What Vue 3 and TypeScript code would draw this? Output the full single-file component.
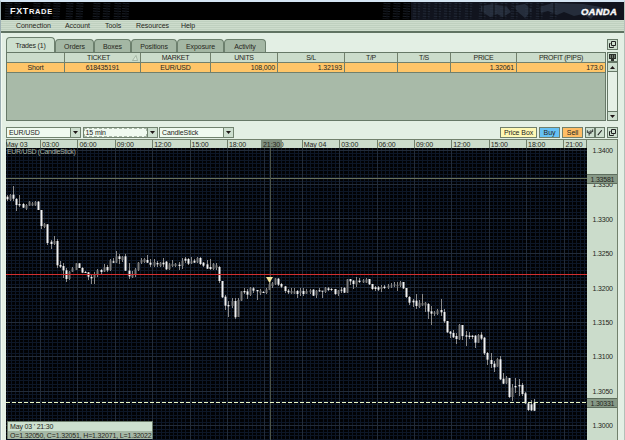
<template>
<div class="platform">
  <header class="banner">
    <svg class="pattern" width="623" height="18" viewBox="0 0 623 18">
      <rect x="410" width="213" height="18" fill="#11141e" />
      <g fill="#252d3b">
        <path d="M480 4l12-2 14 3 4 5-8 5-6-3-7 3-9-6zM512 4l12-2 7 6-7 8-6-5zM538 5l14-4 30 1 18 3 10 5-15 1-5 6-8-5-9 2-10-4-7 3-9-4-7 2z" />
      </g>
      <g v-for="(col, i) in codeCols" :key="i">
        <line :x1="col" y1="1" :x2="col - 1" y2="17" stroke="#303b4b" stroke-width="7" stroke-dasharray="1 1.6" opacity=".55" />
        <line :x1="col" y1="1" :x2="col" y2="17" stroke="#0a0c12" stroke-width="1" />
      </g>
    </svg>
    <span class="brand"><b>FXT</b>RADE</span>
    <span class="oanda">OANDA</span>
  </header>
  <nav class="menu">
    <span v-for="m in menus" :key="m.label" :style="{ width: m.width + 'px' }">{{ m.label }}</span>
  </nav>
  <main class="body">
    <div class="tab-row">
      <div class="tabs">
        <button v-for="(t, i) in tabs" :key="t.label" class="tab" :class="{ active: i === 0 }" :style="{ width: t.width + 'px' }">{{ t.label }}</button>
      </div>
      <button class="icon-btn">
        <svg width="9" height="9" viewBox="0 0 9 9"><path d="M3.5 1.5h4v4h-4zM2.5 3.5h-1v4h4v-1" fill="none" stroke="#222" /></svg>
      </button>
    </div>
    <section class="trades">
      <div class="grid">
        <div class="row head">
          <div v-for="c in columns" :key="c.title" class="cell" :class="{ sorted: c.title === 'TICKET' }" :style="{ width: c.width + 'px' }">{{ c.title }}
            <svg v-if="c.title === 'TICKET'" class="sort" width="6" height="6" viewBox="0 0 6 6"><path d="M.5 5.5L4 .5l1.500 5z" fill="#d8e8d8" stroke="#93a593" stroke-width=".7" /></svg>
          </div>
        </div>
        <div class="row trade">
          <div v-for="(c, i) in columns" :key="c.title" class="cell" :class="{ num: i > 2 }" :style="{ width: c.width + 'px' }">{{ c.value }}</div>
        </div>
      </div>
      <div class="scroll">
        <button class="icon-btn">
          <svg width="9" height="9" viewBox="0 0 9 9"><path d="M1 1h7v5H6v2H3V6H1z" fill="#2b302b" /><path d="M2.500 2v3M4.500 2v3M6.500 2v3" stroke="#9fb09f" stroke-width=".6" /></svg>
        </button>
        <button class="icon-btn arrow"><svg width="5" height="3"><path d="M0 3L2.500 0 5 3z" fill="#201818" /></svg></button>
        <div class="track"></div>
        <button class="icon-btn arrow"><svg width="5" height="3"><path d="M0 0L2.500 3 5 0z" fill="#201818" /></svg></button>
      </div>
    </section>
    <div class="toolbar">
      <div v-for="s in selects" :key="s" class="select" :class="{ focus: s === '15 min' }">
        <span class="value">{{ s }}</span>
        <span class="drop"><svg width="5" height="3"><path d="M0 0L2.500 3 5 0z" fill="#201818" /></svg></span>
      </div>
      <div class="actions">
        <button class="price-box">Price Box</button>
        <button class="buy">Buy</button>
        <button class="sell">Sell</button>
        <div class="tools">
          <button class="icon-btn"><svg width="9" height="9" viewBox="0 0 9 9"><path d="M1.500 2v3M3.500 3v5M5.500 2v4M7.500 1v3M2 4l2 2 3-3" fill="none" stroke="#222" /></svg></button>
          <button class="icon-btn"><svg width="9" height="9" viewBox="0 0 9 9"><path d="M2 7.500L6.500 2" stroke="#222" stroke-width="1.200" /></svg></button>
        </div>
        <button class="icon-btn"><svg width="9" height="9" viewBox="0 0 9 9"><path d="M3.500 1.500h4v4h-4zM2.500 3.500h-1v4h4v-1" fill="none" stroke="#222" /></svg></button>
      </div>
    </div>
    <section class="chart">
      <div class="times">
        <span v-for="(t, i) in times" :key="i" class="time" :class="{ first: i === 0 }">{{ t }}</span>
        <span class="cursor-time">21:30</span>
      </div>
      <div class="plot-row">
        <div class="plot">
          <svg width="581" height="292" viewBox="6 148 581 292" shape-rendering="crispEdges">
            <rect x="6" y="148" width="581" height="292" fill="#010204" />
            <g stroke="#0d1727">
              <line v-for="x in minorX" :key="'a' + x" :x1="x" :x2="x" y1="148" y2="440" />
              <line v-for="y in minorY" :key="'b' + y" x1="6" x2="587" :y1="y" :y2="y" />
            </g>
            <g stroke="#222c3a">
              <line v-for="x in majorX" :key="'c' + x" :x1="x" :x2="x" y1="148" y2="440" />
              <line v-for="y in majorY" :key="'d' + y" x1="6" x2="587" :y1="y" :y2="y" />
            </g>
            <path d="M6 178.500H587" stroke="#68705a" />
            <path d="M270.500 148V440" stroke="#4b5348" />
            <g v-for="(c, i) in candles" :key="i">
              <rect :x="c.x" :y="c.high" width="1" :height="c.low - c.high" fill="#8b8b8b" />
              <rect :x="c.x - 0.5" :y="c.top" width="2" :height="c.height" :fill="c.up ? '#777' : '#f2f2f2'" shape-rendering="auto" />
            </g>
            <path d="M6 274.500H587" stroke="#d32f2f" />
            <path d="M6 402.500H587" stroke="#e9f5c4" stroke-dasharray="4 2" />
            <path d="M266 277h7l-3.500 6z" fill="#f6e7a0" shape-rendering="auto" />
          </svg>
          <span class="plot-title">EUR/USD (CandleStick)</span>
          <div class="info">
            <div>May 03 ' 21:30</div>
            <div class="ohlc">O=1.32050, C=1.32051, H=1.32071, L=1.32022</div>
          </div>
        </div>
        <svg class="prices" width="31" height="292" viewBox="587 148 31 292">
          <text v-for="(p, i) in prices" :key="p" x="592.500" :y="153 + i * 34.400" textLength="20.500">{{ p }}</text>
          <g v-for="m in marks" :key="m.label">
            <rect x="587" :y="m.y" width="30" height="9" fill="#879987" />
            <path :d="`M587 ${m.y + .5}h30M587 ${m.y + 9.5}h30`" stroke="#5d6d5d" />
            <text x="590.500" :y="m.y + 7.500" textLength="24">{{ m.label }}</text>
          </g>
          <path d="M617.500 148v292" stroke="#71806c" />
        </svg>
      </div>
    </section>
  </main>
</div>
</template>
<script lang="ts" setup>
interface Candle {
  x: number
  high: number
  low: number
  top: number
  height: number
  up: boolean
}
const menus = [
  { label: 'Connection', width: 49 },
  { label: 'Account', width: 40 },
  { label: 'Tools', width: 31 },
  { label: 'Resources', width: 45 },
  { label: 'Help', width: 30 },
]
const tabs = [
  { label: 'Trades (1)', width: 49 },
  { label: 'Orders', width: 39 },
  { label: 'Boxes', width: 37 },
  { label: 'Positions', width: 46 },
  { label: 'Exposure', width: 47 },
  { label: 'Activity', width: 42 },
]
const columns = [
  { title: '', width: 58, value: 'Short' },
  { title: 'TICKET', width: 76, value: '618435191' },
  { title: 'MARKET', width: 70, value: 'EUR/USD' },
  { title: 'UNITS', width: 67, value: '108,000' },
  { title: 'S/L', width: 67, value: '1.32193' },
  { title: 'T/P', width: 53, value: '' },
  { title: 'T/S', width: 53, value: '' },
  { title: 'PRICE', width: 66, value: '1.32061' },
  { title: 'PROFIT (PIPS)', width: 88, value: '173.0' },
]
const codeCols = [8, 17, 36, 46, 56, 69, 79, 96, 106, 117, 125, 386, 396, 406, 416, 426, 437, 447, 457, 468, 482, 493, 503, 514, 528, 539, 553]
const selects = ['EUR/USD', '15 min', 'CandleStick']
const times = ['May 03', '03:00', '06:00', '09:00', '12:00', '15:00', '18:00', '21:00', 'May 04', '03:00', '06:00', '09:00', '12:00', '15:00', '18:00', '21:00']
const prices = ['1.3400', '1.3350', '1.3300', '1.3250', '1.3200', '1.3150', '1.3100', '1.3050', '1.3000']
const marks = [
  { label: '1.33581', y: 174 },
  { label: '1.30331', y: 398 },
]

const range = (n: number, start: number, step: number) => Array.from({ length: n }, (_, i) => Math.round(start + i * step) + 0.5)
const majorX = range(15, 40, 37.4)
const minorX = range(140, 6.760, 4.156)
const majorY = range(9, 149.500, 34.450)
const minorY = range(85, 149.500, 3.445)

// each bar is high, low, open/close top, open/close bottom, rising; in thirds of a pixel below base
const series: { base: number; bars: number[][] }[] = [
  { base: 180, bars: [
    [46, 62, 50, 58, 0], [41, 64, 45, 60, 1], [18, 64, 44, 56, 0], [55, 93, 57, 75, 0], [45, 80, 72, 76, 0], [69, 85, 72, 83, 0],
    [72, 90, 75, 86, 1], [63, 78, 65, 77, 1], [66, 78, 70, 76, 1], [63, 78, 66, 76, 1], [62, 91, 65, 90, 0], [90, 147, 90, 138, 0],
    [128, 145, 131, 141, 1], [133, 195, 133, 189, 0], [180, 207, 185, 192, 0], [168, 196, 183, 192, 1], [178, 265, 183, 256, 0],
    [243, 265, 255, 260, 0], [250, 293, 258, 271, 0], [263, 305, 271, 297, 0], [272, 300, 275, 297, 1], [262, 276, 265, 275, 1],
    [249, 270, 250, 270, 1], [249, 265, 250, 264, 0], [262, 279, 264, 278, 0], [274, 279, 276, 279, 0], [276, 300, 277, 290, 0],
    [282, 312, 291, 295, 0], [275, 312, 284, 293, 1], [268, 290, 271, 285, 1], [267, 284, 270, 276, 0], [252, 276, 262, 275, 1],
    [255, 277, 261, 271, 0], [237, 272, 241, 270, 1], [234, 250, 244, 248, 0], [213, 250, 229, 248, 1], [222, 252, 229, 237, 0],
    [228, 245, 230, 240, 1], [222, 272, 229, 272, 0], [250, 296, 272, 289, 0], [272, 293, 283, 292, 1], [265, 290, 268, 285, 1],
    [245, 272, 248, 270, 1], [235, 251, 240, 248, 1], [234, 249, 237, 246, 1], [225, 250, 240, 248, 0], [238, 262, 248, 254, 0],
  ] },
  { base: 230, bars: [
    [88, 112, 96, 107, 1], [92, 112, 99, 103, 0], [95, 110, 98, 108, 1], [85, 110, 98, 103, 0], [92, 120, 95, 118, 0], [100, 120, 103, 118, 1],
    [90, 112, 102, 108, 1], [98, 112, 102, 108, 1], [95, 120, 104, 108, 0], [84, 117, 92, 108, 1], [82, 100, 86, 92, 0], [84, 104, 87, 101, 0],
    [82, 103, 94, 100, 1], [87, 99, 92, 98, 0], [82, 100, 84, 97, 1], [80, 104, 84, 102, 0], [96, 110, 98, 107, 0], [90, 118, 103, 116, 0],
    [88, 120, 111, 117, 0], [98, 120, 102, 117, 1], [100, 120, 106, 114, 1], [108, 160, 111, 153, 0], [152, 205, 153, 202, 0],
    [196, 240, 200, 227, 0], [213, 260, 225, 229, 0], [203, 235, 213, 228, 1], [204, 268, 213, 262, 0], [205, 262, 210, 261, 1],
    [182, 213, 184, 212, 1], [175, 192, 183, 187, 0], [178, 207, 184, 194, 0], [171, 198, 174, 195, 1], [171, 190, 175, 182, 0],
    [180, 210, 180, 184, 0], [177, 194, 182, 190, 1], [183, 190, 186, 189, 0], [173, 191, 178, 189, 1], [160, 181, 163, 180, 1],
    [155, 173, 160, 168, 1], [143, 165, 145, 163, 1], [143, 168, 146, 164, 0], [158, 173, 162, 170, 0], [168, 190, 169, 183, 0],
    [178, 193, 182, 187, 0], [175, 193, 183, 190, 1], [174, 193, 184, 191, 1], [181, 204, 183, 192, 0], [174, 198, 182, 189, 1],
  ] },
  { base: 250, bars: [
    [115, 137, 123, 132, 0], [118, 133, 123, 131, 1], [117, 132, 121, 127, 1], [116, 138, 119, 137, 0], [120, 144, 122, 136, 1],
    [114, 127, 121, 124, 0], [122, 144, 122, 125, 0], [112, 129, 114, 126, 1], [110, 124, 115, 120, 0], [114, 122, 117, 120, 0],
    [116, 135, 117, 132, 0], [119, 137, 121, 132, 1], [112, 128, 119, 122, 0], [110, 130, 114, 128, 0], [87, 129, 88, 128, 1],
    [87, 105, 87, 94, 0], [90, 118, 92, 102, 0], [81, 110, 92, 103, 1], [84, 100, 92, 96, 0], [87, 99, 91, 97, 1], [85, 100, 88, 98, 1],
    [86, 104, 87, 103, 0], [101, 119, 102, 117, 0], [108, 122, 112, 117, 0], [107, 124, 112, 119, 0], [104, 126, 111, 117, 1],
    [104, 118, 110, 114, 0], [102, 117, 107, 113, 1], [100, 113, 106, 110, 1], [97, 110, 103, 107, 1], [96, 122, 105, 109, 1],
    [93, 112, 97, 107, 1], [95, 117, 96, 115, 0], [114, 144, 114, 141, 0], [138, 164, 141, 158, 0], [147, 170, 152, 157, 0],
    [132, 176, 152, 168, 0], [150, 175, 158, 171, 1],
  ] },
  { base: 260, bars: [
    [103, 138, 129, 136, 1], [125, 155, 128, 136, 1], [130, 178, 132, 155, 0], [138, 195, 154, 161, 0], [152, 168, 157, 162, 1],
    [148, 165, 151, 162, 1], [117, 168, 150, 157, 0], [147, 188, 156, 184, 0], [182, 218, 183, 217, 0], [213, 235, 215, 221, 0],
    [210, 235, 219, 232, 0], [218, 253, 228, 237, 0], [192, 240, 195, 238, 1], [195, 240, 195, 228, 0], [212, 258, 226, 230, 0],
    [215, 236, 227, 231, 0], [225, 238, 227, 231, 0], [225, 264, 227, 248, 0], [223, 250, 225, 248, 1], [216, 240, 224, 236, 0],
    [231, 284, 233, 280, 0], [277, 315, 279, 299, 0], [280, 323, 300, 312, 0], [303, 335, 311, 322, 0], [293, 322, 297, 320, 1],
    [289, 360, 298, 358, 0], [338, 372, 356, 371, 0], [347, 372, 353, 370, 1], [353, 414, 354, 411, 0], [371, 423, 383, 411, 1],
    [354, 400, 378, 382, 0], [357, 408, 375, 379, 0], [370, 408, 375, 402, 0], [396, 432, 400, 430, 0], [425, 452, 430, 450, 0],
    [420, 453, 433, 451, 0], [417, 453, 428, 452, 0],
  ] },
]

const candles: Candle[] = series
  .flatMap(s => s.bars.map(b => ({ base: s.base, b })))
  .map(({ base, b }, i) => ({
    x: Math.floor(7.4 + i * 3.12),
    high: base + b[0] / 3,
    low: base + b[1] / 3,
    top: base + b[2] / 3,
    height: (b[3] - b[2]) / 3,
    up: b[4] === 1,
  }))
</script>
<style>
body {
  background: #e3efe4;
  overflow: hidden;
}
</style>
<style scoped>
.platform {
  box-sizing: border-box;
  width: 625px;
  height: 440px;
  border-top: 2px solid #d5e5f3;
  border-left: 1px solid #9db0b4;
  border-right: 1px solid #b3c0b8;
  background: #e3efe4;
  font-family: "Liberation Sans", Arial, sans-serif;
  font-size: 7px;
  line-height: 9px;
  letter-spacing: -0.08px;
  color: #262620;
  overflow: hidden;
}
.platform * {
  box-sizing: border-box;
}
button {
  font: inherit;
  letter-spacing: inherit;
  color: inherit;
  padding: 0;
  margin: 0;
  white-space: nowrap;
}
.banner {
  position: relative;
  display: flex;
  justify-content: space-between;
  align-items: center;
  height: 18px;
  background: #000;
  color: #f4f4f4;
  padding: 0 7px 0 9px;
}
.pattern {
  position: absolute;
  left: 0;
  top: 0;
}
.brand {
  position: relative;
  font-size: 7.5px;
  font-weight: bold;
  letter-spacing: 0.65px;
}
.brand b {
  font-size: 9px;
}
.oanda {
  position: relative;
  font-size: 9.5px;
  font-weight: bold;
  font-style: italic;
  letter-spacing: 0.25px;
  -webkit-text-stroke: 0.4px #fff;
}
.menu {
  display: flex;
  height: 13px;
  padding-left: 15px;
  line-height: 11px;
  letter-spacing: -0.05px;
  border-bottom: 2px solid #607362;
  background: repeating-linear-gradient(#cddccc 0 1px, #bfd0bf 1px 2px);
}
.body {
  padding: 4px 6px 0 4px;
  border-left: 1px solid #f2faf2;
}
.tab-row {
  display: flex;
  justify-content: space-between;
  align-items: center;
  height: 15px;
}
.tabs {
  display: flex;
  align-items: flex-end;
  height: 15px;
}
.tab {
  height: 13px;
  border: 1px solid #6d806e;
  border-bottom: 0;
  border-radius: 4px 4px 0 0;
  background: #a4b7a4;
}
.tab.active {
  height: 15px;
  letter-spacing: -0.2px;
  background: #cee0cf;
}
.icon-btn {
  display: flex;
  align-items: center;
  justify-content: center;
  width: 11px;
  height: 11px;
  flex: none;
  border: 1px solid #667867;
  background: #cddfcf;
}
.trades {
  display: flex;
  justify-content: space-between;
  height: 69px;
}
.grid {
  width: 600px;
  border: 1px solid #667867;
  background: #a8baa8;
}
.row {
  display: flex;
  height: 10px;
  border-bottom: 1px solid #71806c;
}
.cell {
  position: relative;
  flex: none;
  text-align: center;
  border-right: 1px solid #71806c;
  height: 9px;
  letter-spacing: -0.15px;
}
.cell:last-child {
  border-right: 0;
}
.head {
  background: #cbdccb;
}
.head .cell {
  letter-spacing: -0.3px;
}
.head .sorted {
  padding-right: 8px;
}
.trade {
  background: #ffc568;
}
.num {
  text-align: right;
  padding-right: 2px;
}
.sort {
  position: absolute;
  right: 2px;
  top: 2px;
}
.scroll {
  display: flex;
  flex-direction: column;
  width: 11px;
}
.scroll .icon-btn {
  height: 10px;
}
.track {
  flex: 1;
  border: 1px solid #667867;
  border-width: 0 1px;
  background: #e5f0e6;
}
.toolbar {
  display: flex;
  align-items: center;
  height: 18px;
  padding-top: 4px;
  gap: 1.5px;
}
.select {
  display: flex;
  width: 75px;
  height: 11px;
  border: 1px solid #71836f;
  background: #f0faf0;
}
.value {
  flex: 1;
  padding-left: 2px;
  letter-spacing: -0.1px;
}
.focus .value {
  outline: 1px dashed #a9b8a9;
  outline-offset: -1px;
}
.drop {
  display: flex;
  align-items: center;
  justify-content: center;
  width: 10px;
  border-left: 1px solid #71836f;
  background: #cddfcf;
}
.actions {
  display: flex;
  gap: 2px;
  margin-left: auto;
}
.tools {
  display: flex;
}
.tools .icon-btn {
  width: 10px;
}
.actions > button:not(.icon-btn) {
  height: 11px;
  border: 1px solid #71806c;
}
.price-box {
  width: 37px;
  background: #fff8b4;
}
.buy {
  width: 21px;
  background: #66c1f5;
}
.sell {
  width: 21px;
  background: #ffbd65;
}
.times {
  position: relative;
  display: flex;
  width: 612px;
  height: 9px;
  border-top: 1px solid #71806c;
  background: #cbdccb;
  overflow: hidden;
  border-right: 1px solid #71806c;
}
.time {
  width: 37.4px;
  flex: none;
  padding-left: 1px;
  border-left: 1px solid #71806c;
  line-height: 9px;
  white-space: nowrap;
}
.time.first {
  width: 34px;
  padding: 0;
  text-indent: -2px;
}
.time:nth-child(16) {
  width: 24px;
  border-right: 1px solid #71806c;
}
.cursor-time {
  position: absolute;
  left: 255px;
  top: 0;
  width: 21px;
  height: 9px;
  padding-left: 2px;
  background: #7f907f;
}
.plot-row {
  display: flex;
}
.plot {
  position: relative;
  flex: none;
  width: 581px;
  height: 292px;
}
.plot svg,
.prices {
  display: block;
  flex: none;
}
.prices {
  background: #cbdccb;
}
.prices text {
  font-size: 7px;
  letter-spacing: 0;
  fill: #262620;
}
.plot-title {
  position: absolute;
  left: 1px;
  top: -1px;
  letter-spacing: -0.33px;
  color: #a9b6a5;
}
.info {
  position: absolute;
  left: 1px;
  bottom: 1px;
  width: 146px;
  height: 18px;
  border: 1px solid #6d7d6c;
  background: #cde0cf;
  padding-left: 2px;
  letter-spacing: -0.17px;
  white-space: nowrap;
}
.ohlc {
  margin-left: -2px;
  padding-left: 2px;
  height: 8px;
  background: #a6b8a6;
}
</style>
